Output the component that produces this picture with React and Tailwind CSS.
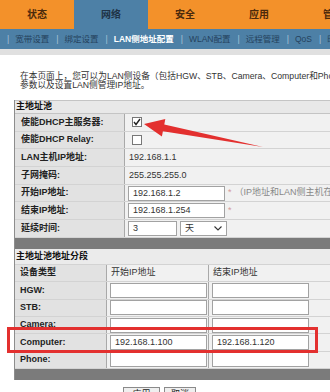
import React from 'react';

const tabs = ['状态', '网络', '安全', '应用', '管理'];
const subs = ['宽带设置', '绑定设置', 'LAN侧地址配置', 'WLAN配置', '远程管理', 'QoS', '时间管理'];

const Input = ({ value = '', w = 'w-[97px]' }) => (
  <div className={`${w} h-[15px] shrink-0 border border-[#a2a2a2] bg-white pl-[4px] flex items-center text-[#333] leading-none`}>
    {value}
  </div>
);

const Check = ({ checked }) => (
  <div className="w-[10px] h-[10px] ml-[4px] border border-[#777] bg-white flex items-center justify-center">
    {checked && (
      <svg width="8" height="8" viewBox="0 0 8 8">
        <polyline points="1,4 3,6.5 7,1" fill="none" stroke="#222" strokeWidth="1.4" />
      </svg>
    )}
  </div>
);

const Row = ({ label, children }) => (
  <div className="flex h-[17.7px] border-b border-[#d3d3d3]">
    <div className="w-[110px] shrink-0 bg-[#e2e2e2] border-r border-[#a9a9a9] pl-[6px] flex items-center font-bold text-[#222]">
      {label}
    </div>
    <div className="flex-1 bg-[#f1f1f1] pl-[3px] flex items-center gap-[3px] text-[#333]">{children}</div>
  </div>
);

const SegRow = ({ label, start = '', end = '', head }) => (
  <div className="flex h-[17.4px] border-b border-[#d3d3d3]">
    <div className="w-[92px] shrink-0 bg-[#e2e2e2] border-r border-[#a9a9a9] pl-[5px] flex items-center font-bold text-[#222]">
      {label}
    </div>
    <div className="w-[102px] shrink-0 bg-[#f1f1f1] border-r border-[#a9a9a9] pl-[3px] flex items-center text-[#333]">
      {head ? <span className="pl-[1px]">{start}</span> : <Input value={start} />}
    </div>
    <div className="flex-1 bg-[#f1f1f1] pl-[3px] flex items-center text-[#333]">
      {head ? <span className="pl-[1px]">{end}</span> : <Input value={end} />}
    </div>
  </div>
);

export default function App() {
  return (
    <div className="relative w-[330px] h-[392px] overflow-hidden bg-white text-[9px] font-['Liberation_Sans','Noto_Sans_CJK_SC',sans-serif]">
      {/* top tabs */}
      <div className="flex h-[29px] bg-[#f3912a]">
        {tabs.map((t, i) => (
          <div
            key={t}
            className={`w-[74px] shrink-0 flex items-center justify-center text-[10px] font-bold ${
              i === 1 ? 'bg-[#4d80a6] text-[#1f3347]' : 'text-[#4b2a0c]'
            }`}
          >
            {t}
          </div>
        ))}
      </div>
      {/* sub nav */}
      <div className="flex items-center h-[20px] bg-[#4d80a6] pl-[7px] whitespace-nowrap text-[8.5px]">
        {subs.map((s) => (
          <React.Fragment key={s}>
            <span className="text-[#a9c2d8] mr-[6px]">|</span>
            <span className={`mr-[7px] ${s === 'LAN侧地址配置' ? 'text-white font-bold' : 'text-[#25425d]'}`}>{s}</span>
          </React.Fragment>
        ))}
      </div>
      <div className="h-[6px] bg-[#e0e0e0]" />

      {/* intro */}
      <div className="pl-[20px] pt-[17px] text-[#333] text-[8.7px] leading-[9px] whitespace-nowrap">
        <div>在本页面上，您可以为LAN侧设备（包括HGW、STB、Camera、Computer和Phone）分配IP地址段，配置DHCP</div>
        <div>参数以及设置LAN侧管理IP地址。</div>
      </div>

      {/* main pool */}
      <div className="ml-[14px] mt-[10px] w-[340px] border-l border-[#8d8d8d]">
        <div className="h-[14px] bg-[#e8e8e8] border-t border-b border-[#c4c4c4] pl-[1px] flex items-center font-bold text-[#111]">
          主地址池
        </div>
        <Row label="使能DHCP主服务器:">
          <Check checked />
        </Row>
        <Row label="使能DHCP Relay:">
          <Check />
        </Row>
        <Row label="LAN主机IP地址:">
          <span className="pl-[1px]">192.168.1.1</span>
        </Row>
        <Row label="子网掩码:">
          <span className="pl-[1px]">255.255.255.0</span>
        </Row>
        <Row label="开始IP地址:">
          <Input value="192.168.1.2" />
          <span className="text-[#d49a9a]">*</span>
          <span className="text-[#888] whitespace-nowrap">（IP地址和LAN侧主机在同一网段）</span>
        </Row>
        <Row label="结束IP地址:">
          <Input value="192.168.1.254" />
          <span className="text-[#d49a9a]">*</span>
        </Row>
        <Row label="延续时间:">
          <Input value="3" w="w-[49px]" />
          <div className="w-[47px] h-[15px] border border-[#a2a2a2] bg-white flex items-center justify-between pl-[4px] pr-[4px] text-[#333]">
            <span>天</span>
            <svg width="8" height="5" viewBox="0 0 8 5">
              <polyline points="0.5,0.5 4,4 7.5,0.5" fill="none" stroke="#333" strokeWidth="1.1" />
            </svg>
          </div>
        </Row>
        <div className="h-[11px] bg-[#7b7b7b]" />

        <div className="h-[16px] bg-[#ebebeb] border-b border-[#d3d3d3] pl-[1px] flex items-center font-bold text-[#111]">
          主地址池地址分段
        </div>
        <SegRow head label="设备类型" start="开始IP地址" end="结束IP地址" />
        <SegRow label="HGW:" />
        <SegRow label="STB:" />
        <SegRow label="Camera:" />
        <SegRow label="Computer:" start="192.168.1.100" end="192.168.1.120" />
        <SegRow label="Phone:" />
        <div className="h-[11px] bg-[#7b7b7b]" />
      </div>

      {/* buttons */}
      <div className="flex gap-[4px] pl-[123px] pt-[7px]">
        <div className="w-[37px] h-[16px] border border-[#8a8a8a] bg-[#efefef] flex items-center justify-center text-[#222]">应用</div>
        <div className="w-[32px] h-[16px] border border-[#8a8a8a] bg-[#efefef] flex items-center justify-center text-[#222]">取消</div>
      </div>

      {/* annotation overlays */}
      <div className="absolute left-[7px] top-[327px] w-[311px] h-[26px] border-[3px] border-[#e3302f]" />
      <svg className="absolute left-0 top-0" width="330" height="392" viewBox="0 0 330 392">
        <polygon
          points="144,124 165.3,119 164.3,124.4 263,147 162.9,131.2 161.9,136.6"
          fill="#e3302f"
        />
      </svg>
    </div>
  );
}
